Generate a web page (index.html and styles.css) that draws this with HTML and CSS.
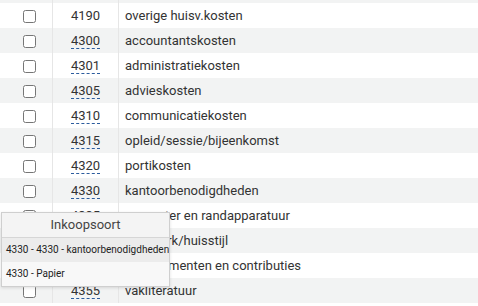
FILE: index.html
```html
<!DOCTYPE html>
<html lang="nl">
<head>
  <meta charset="UTF-8">
  <title>Grootboekrekeningen</title>
  <link rel="stylesheet" href="styles.css">
</head>
<body>
  <table class="ledger">
    <tbody>
      <tr><td class="check"><input type="checkbox"></td><td class="code">4180</td><td class="name">huisvestingskosten</td></tr>
      <tr><td class="check"><input type="checkbox"></td><td class="code">4190</td><td class="name">overige huisv.kosten</td></tr>
      <tr><td class="check"><input type="checkbox"></td><td class="code"><span class="link">4300</span></td><td class="name">accountantskosten</td></tr>
      <tr><td class="check"><input type="checkbox"></td><td class="code"><span class="link">4301</span></td><td class="name">administratiekosten</td></tr>
      <tr><td class="check"><input type="checkbox"></td><td class="code"><span class="link">4305</span></td><td class="name">advieskosten</td></tr>
      <tr><td class="check"><input type="checkbox"></td><td class="code"><span class="link">4310</span></td><td class="name">communicatiekosten</td></tr>
      <tr><td class="check"><input type="checkbox"></td><td class="code"><span class="link">4315</span></td><td class="name">opleid/sessie/bijeenkomst</td></tr>
      <tr><td class="check"><input type="checkbox"></td><td class="code"><span class="link">4320</span></td><td class="name">portikosten</td></tr>
      <tr><td class="check"><input type="checkbox"></td><td class="code"><span class="link">4330</span></td><td class="name">kantoorbenodigdheden</td></tr>
      <tr><td class="check"><input type="checkbox"></td><td class="code"><span class="link">4335</span></td><td class="name">computer en randapparatuur</td></tr>
      <tr><td class="check"><input type="checkbox"></td><td class="code"><span class="link">4340</span></td><td class="name">drukwerk/huisstijl</td></tr>
      <tr><td class="check"><input type="checkbox"></td><td class="code"><span class="link">4350</span></td><td class="name">abonnementen en contributies</td></tr>
      <tr><td class="check"><input type="checkbox"></td><td class="code"><span class="link">4355</span></td><td class="name">vakliteratuur</td></tr>
    </tbody>
  </table>

  <div class="popup">
    <div class="popup-title">Inkoopsoort</div>
    <div class="popup-item active">4330 - 4330 - kantoorbenodigdheden</div>
    <div class="popup-item">4330 - Papier</div>
  </div>
</body>
</html>
```

FILE: styles.css
```css
body {
  margin: 0;
  font-family: Roboto, "Liberation Sans", sans-serif;
  color: #333;
  background: #fff;
  overflow: hidden;
}

.ledger {
  border-collapse: collapse;
  width: 100%;
  margin-top: -22px;
  font-size: 13px;
}

.ledger tr {
  height: 25px;
}

.ledger tr:nth-child(odd) {
  background: #f2f3f3;
}

.ledger td {
  padding: 0;
  vertical-align: middle;
}

.check {
  width: 52px;
  text-align: center;
  border-right: 1px solid #e6e6e6;
}

.check input {
  width: 13px;
  height: 13px;
  margin: 0 0 0 6px;
  vertical-align: middle;
}

.code {
  width: 65px;
  text-align: center;
  border-right: 1px solid #e6e6e6;
}

.link {
  border-bottom: 1px dashed #2b5c9e;
}

.name {
  padding-left: 6px !important;
}

.popup {
  position: absolute;
  left: 1px;
  top: 212px;
  width: 167px;
  background: #f8f8f8;
  border: 1px solid #cfcfcf;
  box-shadow: 0 1px 3px rgba(0, 0, 0, 0.12);
  font-size: 10px;
  color: #222;
  overflow: hidden;
}

.popup-title {
  height: 24px;
  line-height: 24px;
  text-align: center;
  font-size: 13px;
  color: #444;
  background: #f4f4f4;
  border-bottom: 1px solid #d6d6d6;
}

.popup-item {
  height: 24px;
  line-height: 24px;
  padding-left: 4px;
  white-space: nowrap;
}

.popup-item.active {
  background: #ececec;
}
```
